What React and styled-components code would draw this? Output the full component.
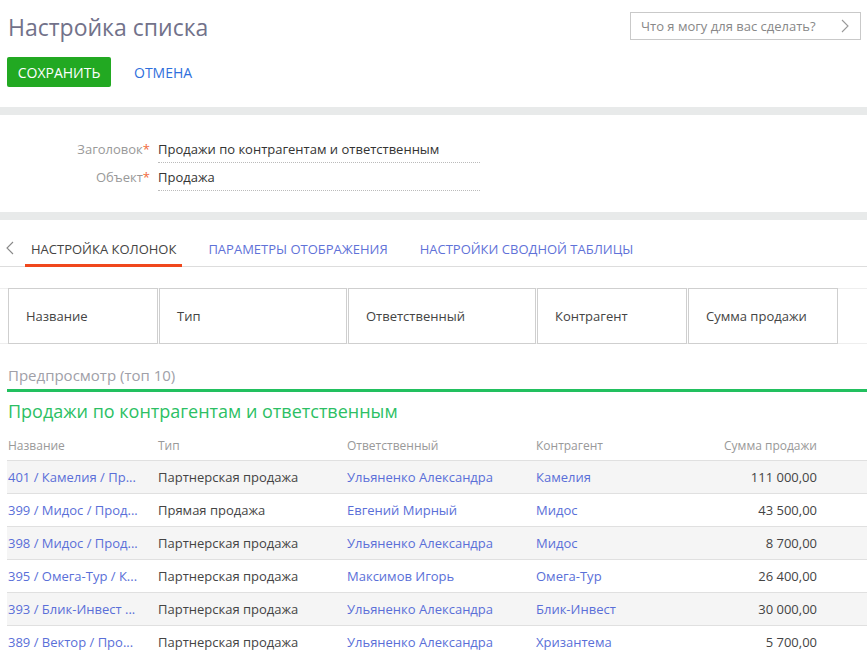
import React from "react";
import styled, { createGlobalStyle } from "styled-components";

const Global = createGlobalStyle`
  html, body { margin: 0; padding: 0; background: #fff; }
  body { font-family: "Open Sans", "Noto Sans", sans-serif; color: #444; overflow: hidden; }
  * { box-sizing: border-box; }
`;

const Page = styled.div`
  width: 867px;
  height: 656px;
  overflow: hidden;
  background: #fff;
`;

const Header = styled.header`
  height: 107px;
  padding: 12px 7px 0 7px;
  display: flex;
  justify-content: space-between;
  align-items: flex-start;
`;

const HeaderLeft = styled.div`
  display: flex;
  flex-direction: column;
`;

const Title = styled.h1`
  margin: 0 0 0 1px;
  font-size: 23px;
  line-height: 30px;
  font-weight: 400;
  color: #72728a;
`;

const Actions = styled.div`
  display: flex;
  align-items: center;
  gap: 23px;
  margin-top: 15px;
`;

const SaveButton = styled.button`
  height: 30px;
  width: 104px;
  border: none;
  border-radius: 2px;
  background: #22a922;
  color: #fff;
  font-family: inherit;
  font-size: 14px;
  padding: 0;
  cursor: pointer;
`;

const CancelButton = styled.button`
  border: none;
  background: none;
  color: #2f6fdc;
  font-family: inherit;
  font-size: 14px;
  padding: 0;
  cursor: pointer;
`;

const Search = styled.div`
  width: 231px;
  height: 28px;
  margin-right: -1px;
  border: 1px solid #c9c9c9;
  display: flex;
  align-items: center;
  justify-content: space-between;
  padding: 0 11px 0 10px;
  font-size: 13px;
  color: #888;
`;

const Band = styled.div`
  height: 8px;
  background: #e8eaea;
`;

const FormSection = styled.section`
  height: 97px;
  padding-top: 20px;
  display: flex;
  flex-direction: column;
`;

const FieldRow = styled.div`
  display: flex;
  align-items: center;
  height: 28px;
`;

const FieldLabel = styled.div`
  width: 150px;
  text-align: right;
  font-size: 13px;
  color: #999;
  span { color: #f26a3c; }
`;

const FieldValue = styled.div`
  margin-left: 8px;
  width: 322px;
  height: 28px;
  line-height: 28px;
  font-size: 13px;
  color: #333;
  border-bottom: 1px dotted #bbb;
`;

const TabBar = styled.nav`
  margin-top: 10px;
  height: 37px;
  display: flex;
  align-items: stretch;
  border-bottom: 1px solid #ddd;
`;

const TabArrow = styled.div`
  width: 18px;
  display: flex;
  align-items: center;
  justify-content: center;
  padding-left: 2px;
`;

const Tab = styled.div`
  display: flex;
  align-items: center;
  padding: 0 6px;
  margin-right: 20px;
  margin-left: ${p => (p.$first ? "7px" : "0")};
  font-size: 13px;
  color: ${p => (p.$active ? "#444" : "#5f72d8")};
  border-bottom: 3px solid ${p => (p.$active ? "#f0471c" : "transparent")};
  margin-bottom: -1px;
  padding-top: 3px;
`;

const ColumnsArea = styled.div`
  margin-top: 21px;
  border-top: 1px solid #eee;
  border-bottom: 1px solid #eee;
  display: flex;
  gap: 1px;
  padding-left: 8px;
  height: 56px;
`;

const ColumnBox = styled.div`
  width: ${p => p.$w}px;
  height: 56px;
  margin-top: -1px;
  border: 1px solid #cfcfcf;
  display: flex;
  align-items: center;
  padding-left: 17px;
  font-size: 13px;
  color: #444;
`;

const PreviewLabel = styled.div`
  margin: 20px 0 0 8px;
  font-size: 15px;
  line-height: 22px;
  color: #a0a0a8;
`;

const GreenLine = styled.div`
  margin: 3px 0 0 7px;
  height: 3px;
  background: #22c05f;
`;

const ReportTitle = styled.h2`
  margin: 7px 0 0 8px;
  font-size: 18px;
  line-height: 24px;
  font-weight: 400;
  color: #2cbf64;
`;

const Table = styled.div`
  margin: 12px 0 0 7px;
`;

const HeadRow = styled.div`
  display: grid;
  grid-template-columns: 150px 189px 189px 151px 130px;
  padding-left: 1px;
  height: 20px;
  align-items: center;
  font-size: 12px;
  color: #999;
  border-bottom: 1px solid #e0e0e0;
  padding-bottom: 5px;
  box-sizing: content-box;
`;

const Row = styled.div`
  display: grid;
  grid-template-columns: 150px 189px 189px 151px 130px;
  padding-left: 1px;
  height: 32px;
  align-items: center;
  font-size: 13px;
  background: ${p => (p.$odd ? "#f5f5f5" : "#fff")};
  border-bottom: 1px solid #e0e0e0;
  box-sizing: content-box;
`;

const Cell = styled.div`
  color: ${p => (p.$link ? "#5a6fd8" : "#444")};
  text-align: ${p => (p.$right ? "right" : "left")};
  white-space: nowrap;
  overflow: hidden;
`;

const HeadCell = styled.div`
  text-align: ${p => (p.$right ? "right" : "left")};
`;

const Chevron = ({ dir = "right", color = "#888" }) => (
  <svg width="8" height="14" viewBox="0 0 8 14">
    <path
      d={dir === "right" ? "M1 1 L7 7 L1 13" : "M7 1 L1 7 L7 13"}
      fill="none"
      stroke={color}
      strokeWidth="1.1"
    />
  </svg>
);

const columns = [
  { name: "Название", w: 150 },
  { name: "Тип", w: 188 },
  { name: "Ответственный", w: 188 },
  { name: "Контрагент", w: 150 },
  { name: "Сумма продажи", w: 150 },
];

const rows = [
  ["401 / Камелия / Пр...", "Партнерская продажа", "Ульяненко Александра", "Камелия", "111 000,00"],
  ["399 / Мидос / Прод...", "Прямая продажа", "Евгений Мирный", "Мидос", "43 500,00"],
  ["398 / Мидос / Прод...", "Партнерская продажа", "Ульяненко Александра", "Мидос", "8 700,00"],
  ["395 / Омега-Тур / К...", "Партнерская продажа", "Максимов Игорь", "Омега-Тур", "26 400,00"],
  ["393 / Блик-Инвест ...", "Партнерская продажа", "Ульяненко Александра", "Блик-Инвест", "30 000,00"],
  ["389 / Вектор / Про...", "Партнерская продажа", "Ульяненко Александра", "Хризантема", "5 700,00"],
];

export default function App() {
  return (
    <Page>
      <Global />
      <Header>
        <HeaderLeft>
          <Title>Настройка списка</Title>
          <Actions>
            <SaveButton>СОХРАНИТЬ</SaveButton>
            <CancelButton>ОТМЕНА</CancelButton>
          </Actions>
        </HeaderLeft>
        <Search>
          <span>Что я могу для вас сделать?</span>
          <Chevron dir="right" color="#999" />
        </Search>
      </Header>
      <Band />
      <FormSection>
        <FieldRow>
          <FieldLabel>Заголовок<span>*</span></FieldLabel>
          <FieldValue>Продажи по контрагентам и ответственным</FieldValue>
        </FieldRow>
        <FieldRow>
          <FieldLabel>Объект<span>*</span></FieldLabel>
          <FieldValue>Продажа</FieldValue>
        </FieldRow>
      </FormSection>
      <Band />
      <TabBar>
        <TabArrow>
          <Chevron dir="left" color="#888" />
        </TabArrow>
        <Tab $active $first>НАСТРОЙКА КОЛОНОК</Tab>
        <Tab>ПАРАМЕТРЫ ОТОБРАЖЕНИЯ</Tab>
        <Tab>НАСТРОЙКИ СВОДНОЙ ТАБЛИЦЫ</Tab>
      </TabBar>
      <ColumnsArea>
        {columns.map(c => (
          <ColumnBox key={c.name} $w={c.w}>{c.name}</ColumnBox>
        ))}
      </ColumnsArea>
      <PreviewLabel>Предпросмотр (топ 10)</PreviewLabel>
      <GreenLine />
      <ReportTitle>Продажи по контрагентам и ответственным</ReportTitle>
      <Table>
        <HeadRow>
          <HeadCell>Название</HeadCell>
          <HeadCell>Тип</HeadCell>
          <HeadCell>Ответственный</HeadCell>
          <HeadCell>Контрагент</HeadCell>
          <HeadCell $right>Сумма продажи</HeadCell>
        </HeadRow>
        {rows.map((r, i) => (
          <Row key={i} $odd={i % 2 === 0}>
            <Cell $link>{r[0]}</Cell>
            <Cell>{r[1]}</Cell>
            <Cell $link>{r[2]}</Cell>
            <Cell $link>{r[3]}</Cell>
            <Cell $right>{r[4]}</Cell>
          </Row>
        ))}
      </Table>
    </Page>
  );
}
